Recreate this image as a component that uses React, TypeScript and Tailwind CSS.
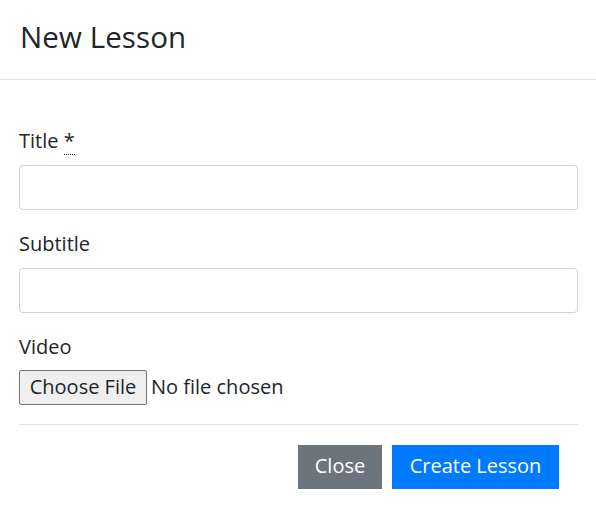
export default function App() {
  return (
    <div className="min-h-[526px] w-full bg-white text-[#212529] font-['Open_Sans',sans-serif]">
      {/* Header */}
      <div className="flex h-20 items-center border-b border-[#dee2e6] px-5 pb-[5px]">
        <h5 className="text-[29.5px] leading-none font-normal tracking-[0.1px]">New Lesson</h5>
      </div>

      {/* Body */}
      <div className="px-[19px] pt-[47px] pr-[18px]">
        <div className="mb-5">
          <label className="mb-[11px] block text-[20px] leading-[27px]">
            Title{" "}
            <abbr title="required" className="no-underline border-b border-dotted border-[#212529]">
              *
            </abbr>
          </label>
          <input
            type="text"
            className="block h-[45px] w-full rounded border border-[#ced4da] px-3 text-base outline-none"
          />
        </div>

        <div className="mb-5">
          <label className="mb-[11px] block text-[20px] leading-[27px]">Subtitle</label>
          <input
            type="text"
            className="block h-[45px] w-full rounded border border-[#ced4da] px-3 text-base outline-none"
          />
        </div>

        <div>
          <label className="mb-[10px] block text-[20px] leading-[27px]">Video</label>
          <div className="flex h-[35px] items-center gap-[4px] text-[20px] leading-none">
            <button
              type="button"
              className="h-[35px] w-[128px] rounded-[2px] border border-[#767676] bg-[#efefef] pb-[2px]"
            >
              Choose File
            </button>
            <span className="pb-[2px]">No file chosen</span>
          </div>
        </div>

        {/* Footer */}
        <div className="mt-[19px] flex justify-end gap-[10px] border-t border-[#dee2e6] pt-[20px] pr-[19px]">
          <button type="button" className="h-[44px] w-[84px] bg-[#6c757d] pb-[3px] text-[20px] text-white">
            Close
          </button>
          <button type="button" className="h-[44px] w-[167px] bg-[#007bff] pb-[3px] text-[20px] text-white">
            Create Lesson
          </button>
        </div>
      </div>
    </div>
  );
}
